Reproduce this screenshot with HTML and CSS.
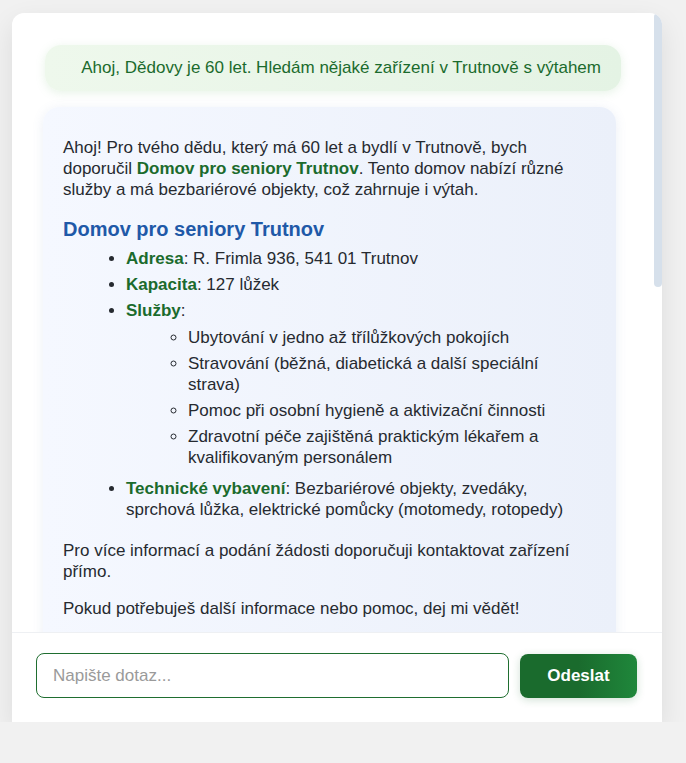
FILE: index.html
```html
<!DOCTYPE html>
<html lang="cs">
<head>
<meta charset="utf-8">
<title>Chat</title>
<link rel="stylesheet" href="styles.css">
</head>
<body>
<div class="chat">
  <div class="chat-body">
    <div class="messages">
      <div class="msg user">Ahoj, Dědovy je 60 let. Hledám nějaké zařízení v Trutnově s výtahem</div>
      <div class="msg bot">
        <p>Ahoj! Pro tvého dědu, který má 60 let a bydlí v Trutnově, bych doporučil <strong>Domov pro seniory Trutnov</strong>. Tento domov nabízí různé služby a má bezbariérové objekty, což zahrnuje i výtah.</p>
        <h3>Domov pro seniory Trutnov</h3>
        <ul>
          <li><strong>Adresa</strong>: R. Frimla 936, 541 01 Trutnov</li>
          <li><strong>Kapacita</strong>: 127 lůžek</li>
          <li><strong>Služby</strong>:
            <ul>
              <li>Ubytování v jedno až třílůžkových pokojích</li>
              <li>Stravování (běžná, diabetická a další speciální strava)</li>
              <li>Pomoc při osobní hygieně a aktivizační činnosti</li>
              <li>Zdravotní péče zajištěná praktickým lékařem a kvalifikovaným personálem</li>
            </ul>
          </li>
          <li><strong>Technické vybavení</strong>: Bezbariérové objekty, zvedáky, sprchová lůžka, elektrické pomůcky (motomedy, rotopedy)</li>
        </ul>
        <p>Pro více informací a podání žádosti doporučuji kontaktovat zařízení přímo.</p>
        <p>Pokud potřebuješ další informace nebo pomoc, dej mi vědět!</p>
      </div>
    </div>
    <div class="scroll-thumb"></div>
  </div>
  <form class="composer">
    <input class="field" type="text" placeholder="Napište dotaz..." autofocus>
    <button class="send" type="button">Odeslat</button>
  </form>
</div>
</body>
</html>
```
FILE: styles.css
```css
html, body {
  margin: 0;
  padding: 0;
  background: #f1f1f1;
  font-family: "Liberation Sans", Arial, sans-serif;
}

.chat {
  margin: 13px 0 0 12px;
  width: 650px;
  height: 709px;
  background: #ffffff;
  border-radius: 12px 12px 0 0;
  box-shadow: 0 10px 28px rgba(0, 0, 0, 0.09);
  display: flex;
  flex-direction: column;
  overflow: hidden;
}

.chat-body {
  position: relative;
  flex: 1;
  min-height: 0;
}

.messages {
  height: 100%;
  box-sizing: border-box;
  overflow: hidden;
  padding: 32px 28px 0 20px;
  display: flex;
  flex-direction: column;
}

.scroll-thumb {
  position: absolute;
  top: 0;
  right: 0;
  width: 8px;
  height: 274px;
  border-radius: 4px;
  background: #d6e0eb;
}

.msg {
  font-size: 17px;
  border-radius: 16px;
  flex-shrink: 0;
}

.user {
  align-self: flex-end;
  margin-right: 13px;
  width: 576px;
  box-sizing: border-box;
  padding: 12px 20px;
  line-height: 22px;
  text-align: right;
  color: #1b6b2d;
  background: linear-gradient(90deg, #eef8ec, #e4f3e4);
  box-shadow: 0 2px 10px rgba(120, 190, 120, 0.18);
}

.bot {
  align-self: flex-start;
  margin: 16px 0 0 11px;
  width: 573px;
  box-sizing: border-box;
  padding: 14px 26px 14px 20px;
  line-height: 21px;
  color: #262a30;
  background: linear-gradient(90deg, #f5f8ff, #ebf0fa);
  box-shadow: 0 2px 12px rgba(90, 120, 180, 0.12);
}

.bot p {
  margin: 16px 0;
}

.bot strong {
  color: #1b6b2d;
}

.bot h3 {
  margin: 18px 0 8px;
  font-size: 20px;
  line-height: 22px;
  color: #1f59a8;
}

.bot ul {
  margin: 0 0 20px;
  padding-left: 63px;
}

.bot li {
  margin: 0 0 5px;
}

.bot ul ul {
  margin: 6px 0 10px;
  padding-left: 62px;
  list-style: circle;
}

.composer {
  margin: 0;
  border-top: 1px solid #eef0f3;
  padding: 20px 25px 24px 24px;
  display: flex;
  gap: 11px;
  align-items: center;
}

.field {
  flex: 1;
  height: 45px;
  box-sizing: border-box;
  border: 1px solid #1f6e30;
  border-radius: 8px;
  padding: 0 16px;
  font-family: "Liberation Sans", Arial, sans-serif;
  font-size: 17px;
  color: #222;
  caret-color: #1a6fe8;
  outline: none;
  background: #fff;
}

.field::placeholder {
  color: #9a9a9a;
}

.send {
  width: 117px;
  height: 44px;
  border: none;
  border-radius: 8px;
  background: linear-gradient(90deg, #1a6b2d 50%, #1f873b);
  color: #ffffff;
  font-family: "Liberation Sans", Arial, sans-serif;
  font-size: 17px;
  font-weight: bold;
  box-shadow: 0 2px 8px rgba(27, 107, 45, 0.2);
  cursor: pointer;
}
```
